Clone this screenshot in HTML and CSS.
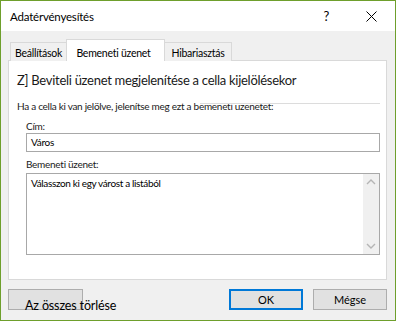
FILE: index.html
```html
<!DOCTYPE html>
<html lang="hu">
<head>
    <meta charset="UTF-8">
    <title>Adatérvényesítés</title>
    <link rel="stylesheet" href="styles.css">
</head>
<body>
    <div class="window">
        <div class="titlebar">
            <span class="title">Adatérvényesítés</span>
            <span class="help">?</span>
            <span class="close">
                <svg width="11" height="11" viewBox="0 0 11 11"><path d="M0.5 0.5 L10.5 10.5 M10.5 0.5 L0.5 10.5" stroke="#000" stroke-width="1"/></svg>
            </span>
        </div>
        <div class="content">
            <div class="tabs">
                <div class="tab first">Beállítások</div>
                <div class="tab active">Bemeneti üzenet</div>
                <div class="tab third">Hibariasztás</div>
            </div>
            <div class="panel">
                <div class="heading">Z] Beviteli üzenet megjelenítése a cella kijelölésekor</div>
                <div class="group">
                    <div class="group-label">Ha a cella ki van jelölve, jelenítse meg ezt a bemeneti üzenetet:</div>
                    <div class="rule"></div>
                    <div class="field title-field">
                        <label for="cim">Cím:</label>
                        <div class="input" id="cim">Város</div>
                    </div>
                    <div class="field">
                        <label for="uzenet">Bemeneti üzenet:</label>
                        <div class="textarea" id="uzenet">
                            <div class="text">Válasszon ki egy várost a listából</div>
                            <div class="scrollbar">
                                <svg width="16" height="16" viewBox="0 0 16 16"><path d="M4 10 L8 6 L12 10" fill="none" stroke="#b5b5b5" stroke-width="1.4"/></svg>
                                <svg width="16" height="16" viewBox="0 0 16 16"><path d="M4 6 L8 10 L12 6" fill="none" stroke="#b5b5b5" stroke-width="1.4"/></svg>
                            </div>
                        </div>
                    </div>
                </div>
            </div>
            <div class="buttons">
                <button class="btn clear">Az összes törlése</button>
                <span class="spacer"></span>
                <button class="btn ok">OK</button>
                <button class="btn cancel">Mégse</button>
            </div>
        </div>
    </div>
</body>
</html>
```

FILE: styles.css
```css
body {
    margin: 0;
    font-family: Lato, "Liberation Sans", sans-serif;
    color: #000;
}

.window {
    width: 396px;
    height: 321px;
    box-sizing: border-box;
    border: 1px solid #6e9f2c;
    display: flex;
    flex-direction: column;
    background-color: #f0f0f0;
}

/* Title bar */
.titlebar {
    height: 30px;
    background-color: #ffffff;
    display: flex;
    align-items: center;
    font-size: 11.5px;
    letter-spacing: -0.2px;
}

.titlebar .title {
    margin-left: 9px;
    flex: 1;
}

.titlebar .help {
    font-size: 13px;
    margin-right: 37px;
}

.titlebar .close {
    display: flex;
    margin-right: 18px;
}

.content {
    flex: 1;
    padding: 8px 8px 0 7px;
    display: flex;
    flex-direction: column;
}

/* Tabs */
.tabs {
    display: flex;
    align-items: flex-end;
    padding-left: 2px;
    height: 22px;
    position: relative;
    z-index: 1;
    margin-bottom: -1px;
}

.tab {
    font-size: 10.5px;
    letter-spacing: -0.25px;
    height: 19px;
    line-height: 20px;
    text-align: center;
    border: 1px solid #d9d9d9;
    border-bottom: none;
    background-color: #f0f0f0;
    box-sizing: border-box;
}

.tab.first {
    width: 57px;
}

.tab.third {
    width: 68px;
}

.tab.active {
    width: 99px;
    height: 22px;
    line-height: 27px;
    background-color: #ffffff;
    margin: 0 -1px;
    padding-right: 4px;
}

/* Panel */
.panel {
    height: 220px;
    box-sizing: border-box;
    background-color: #ffffff;
    border: 1px solid #d9d9d9;
    padding: 10px 6px 0 8px;
}

.heading {
    font-size: 13px;
    letter-spacing: -0.28px;
    line-height: 19px;
    color: #1a1a1a;
}

.group {
    margin-top: 9px;
    display: flex;
    flex-direction: column;
    font-size: 10px;
    letter-spacing: -0.28px;
    color: #1a1a1a;
}

.group-label {
    line-height: 14px;
}

.rule {
    height: 1px;
    background-color: #dcdcdc;
    margin: -10px 0 0 183px;
}

.field {
    margin-left: 9px;
    display: flex;
    flex-direction: column;
}

.field label {
    line-height: 13px;
    margin-top: 6px;
}

.title-field label {
    margin-top: 16px;
}

.input {
    height: 19px;
    box-sizing: border-box;
    border: 1px solid #a8a8a8;
    line-height: 17px;
    padding-left: 4px;
    color: #000;
}

.textarea {
    height: 82px;
    margin-top: 2px;
    box-sizing: border-box;
    border: 1px solid #a8a8a8;
    display: flex;
    color: #000;
}

.textarea .text {
    flex: 1;
    padding: 2px 4px;
    line-height: 14px;
    letter-spacing: -0.35px;
}

.scrollbar {
    width: 16px;
    background-color: #f0f0f0;
    display: flex;
    flex-direction: column;
    justify-content: space-between;
}

/* Buttons */
.buttons {
    display: flex;
    margin-top: 9px;
    height: 21px;
}

.spacer {
    flex: 1;
}

.btn {
    font-family: Lato, "Liberation Sans", sans-serif;
    font-size: 11px;
    height: 21px;
    box-sizing: border-box;
    background-color: #e1e1e1;
    border: 1px solid #adadad;
    padding: 0;
    color: #000;
}

.btn.clear {
    width: 75px;
    font-size: 12.5px;
    letter-spacing: -0.14px;
    white-space: nowrap;
    text-align: left;
    padding: 10px 0 0 16px;
    overflow: visible;
    line-height: 12px;
}

.btn.ok {
    width: 74px;
    border: 2px solid #0078d7;
    margin-right: 10px;
}

.btn.cancel {
    width: 74px;
}
```
